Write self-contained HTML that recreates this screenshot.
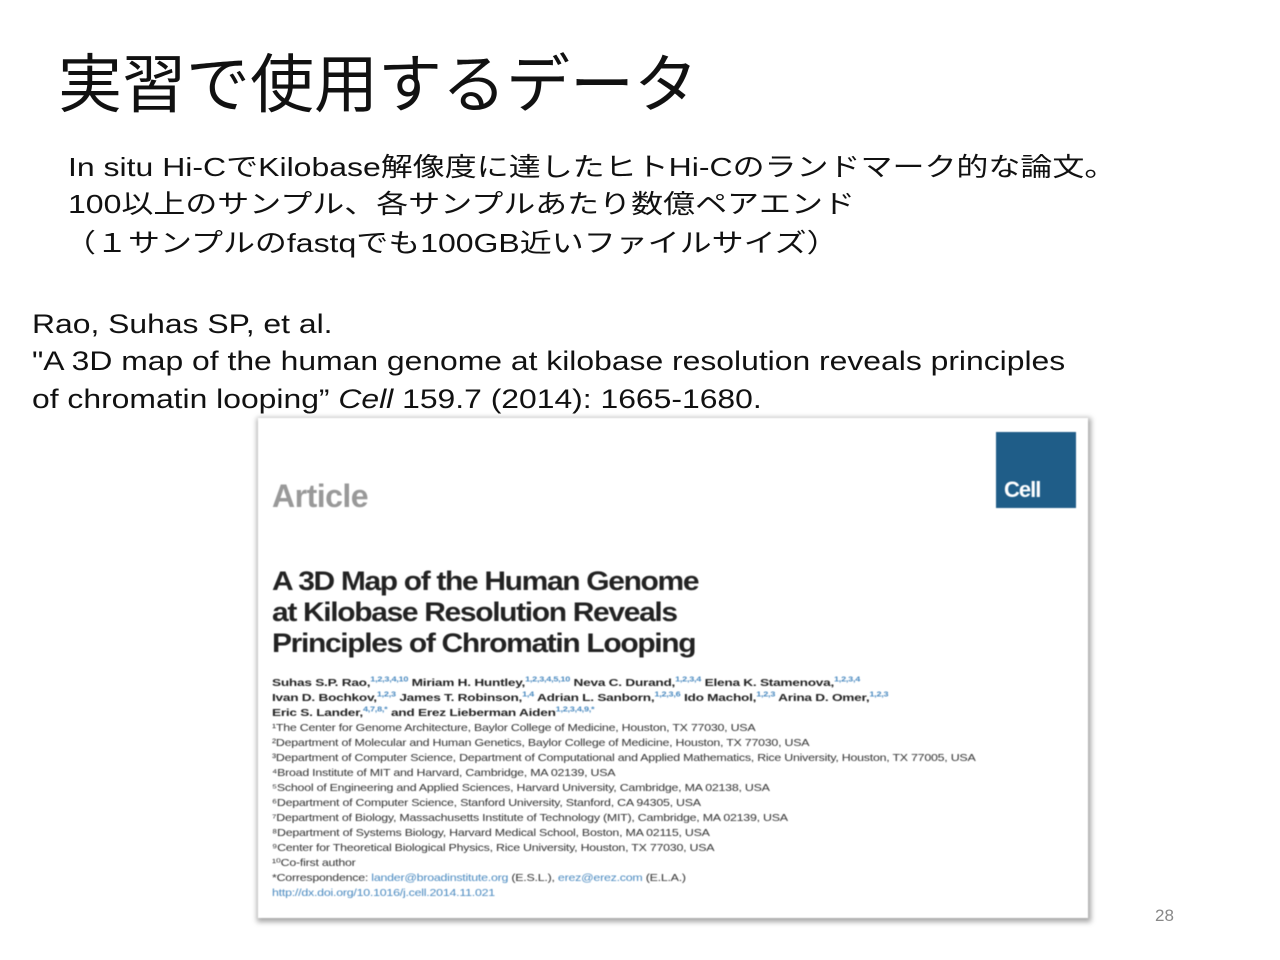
<!DOCTYPE html>
<html><head><meta charset="utf-8"><style>
body{margin:0;width:1280px;height:960px;background:#fff;position:relative;overflow:hidden;font-family:"Liberation Sans","Noto Sans CJK JP",sans-serif;color:#111}
.a{position:absolute;white-space:nowrap;transform-origin:0 0}
.t{left:58px;top:34px;font-size:64px;font-family:"Noto Sans CJK JP",sans-serif;font-weight:400}
.b{left:68px;font-size:26px;transform:scaleX(1.23)}
.c{left:32px;font-size:27px;transform:scaleX(1.18)}
.paper{position:absolute;left:258px;top:418px;width:830px;height:500px;background:#fff;box-shadow:1px 2px 5px 2px rgba(0,0,0,.35);filter:blur(0.6px)}
.p{position:absolute;white-space:nowrap;transform-origin:0 0}
.h{left:14px;font-size:27px;font-weight:bold;letter-spacing:-1.2px;color:#222;transform:scaleX(1.11)}
.s{left:14px;font-size:10.5px;color:#333;letter-spacing:-.2px;transform:scaleX(1.18)}
.s.au{transform:scaleX(1.3)}
.s b{color:#222}
sup{color:#4a8ac0;font-size:7px}
</style></head><body>
<div class="a t">実習で使用するデータ</div>
<div class="a b" style="top:147px">In situ Hi-CでKilobase解像度に達したヒトHi-Cのランドマーク的な論文。</div>
<div class="a b" style="top:184px">100以上のサンプル、各サンプルあたり数億ペアエンド</div>
<div class="a b" style="top:223px;left:64px">（１サンプルのfastqでも100GB近いファイルサイズ）</div>
<div class="a c" style="top:309px">Rao, Suhas SP, et al.</div>
<div class="a c" style="top:346px">"A 3D map of the human genome at kilobase resolution reveals principles</div>
<div class="a c" style="top:384px">of chromatin looping” <i>Cell</i> 159.7 (2014): 1665-1680.</div>
<div class="paper">
<div class="p" style="left:14px;top:60px;font-size:32px;font-weight:bold;color:#999;letter-spacing:-0.5px">Article</div>
<div class="p" style="left:738px;top:14px;width:80px;height:76px;background:#1f5d88"><span style="position:absolute;left:8px;top:45px;color:#fff;font-weight:bold;font-size:22px;letter-spacing:-1px">Cell</span></div>
<div class="p h" style="top:148px">A 3D Map of the Human Genome</div>
<div class="p h" style="top:179px">at Kilobase Resolution Reveals</div>
<div class="p h" style="top:210px">Principles of Chromatin Looping</div>
<div class="p s au" style="top:258px"><b>Suhas S.P. Rao,<sup>1,2,3,4,10</sup> Miriam H. Huntley,<sup>1,2,3,4,5,10</sup> Neva C. Durand,<sup>1,2,3,4</sup> Elena K. Stamenova,<sup>1,2,3,4</sup></b></div>
<div class="p s au" style="top:273px"><b>Ivan D. Bochkov,<sup>1,2,3</sup> James T. Robinson,<sup>1,4</sup> Adrian L. Sanborn,<sup>1,2,3,6</sup> Ido Machol,<sup>1,2,3</sup> Arina D. Omer,<sup>1,2,3</sup></b></div>
<div class="p s au" style="top:288px"><b>Eric S. Lander,<sup>4,7,8,*</sup> and Erez Lieberman Aiden<sup>1,2,3,4,9,*</sup></b></div>
<div class="p s" style="top:304px">¹The Center for Genome Architecture, Baylor College of Medicine, Houston, TX 77030, USA</div>
<div class="p s" style="top:319px">²Department of Molecular and Human Genetics, Baylor College of Medicine, Houston, TX 77030, USA</div>
<div class="p s" style="top:334px">³Department of Computer Science, Department of Computational and Applied Mathematics, Rice University, Houston, TX 77005, USA</div>
<div class="p s" style="top:349px">⁴Broad Institute of MIT and Harvard, Cambridge, MA 02139, USA</div>
<div class="p s" style="top:364px">⁵School of Engineering and Applied Sciences, Harvard University, Cambridge, MA 02138, USA</div>
<div class="p s" style="top:379px">⁶Department of Computer Science, Stanford University, Stanford, CA 94305, USA</div>
<div class="p s" style="top:394px">⁷Department of Biology, Massachusetts Institute of Technology (MIT), Cambridge, MA 02139, USA</div>
<div class="p s" style="top:409px">⁸Department of Systems Biology, Harvard Medical School, Boston, MA 02115, USA</div>
<div class="p s" style="top:424px">⁹Center for Theoretical Biological Physics, Rice University, Houston, TX 77030, USA</div>
<div class="p s" style="top:439px">¹⁰Co-first author</div>
<div class="p s" style="top:454px">*Correspondence: <span style="color:#4a8ac0">lander@broadinstitute.org</span> (E.S.L.), <span style="color:#4a8ac0">erez@erez.com</span> (E.L.A.)</div>
<div class="p s" style="top:469px;color:#4a8ac0">http://dx.doi.org/10.1016/j.cell.2014.11.021</div>
</div>
<div class="a" style="left:1155px;top:906px;font-size:17px;color:#888">28</div>
</body></html>
